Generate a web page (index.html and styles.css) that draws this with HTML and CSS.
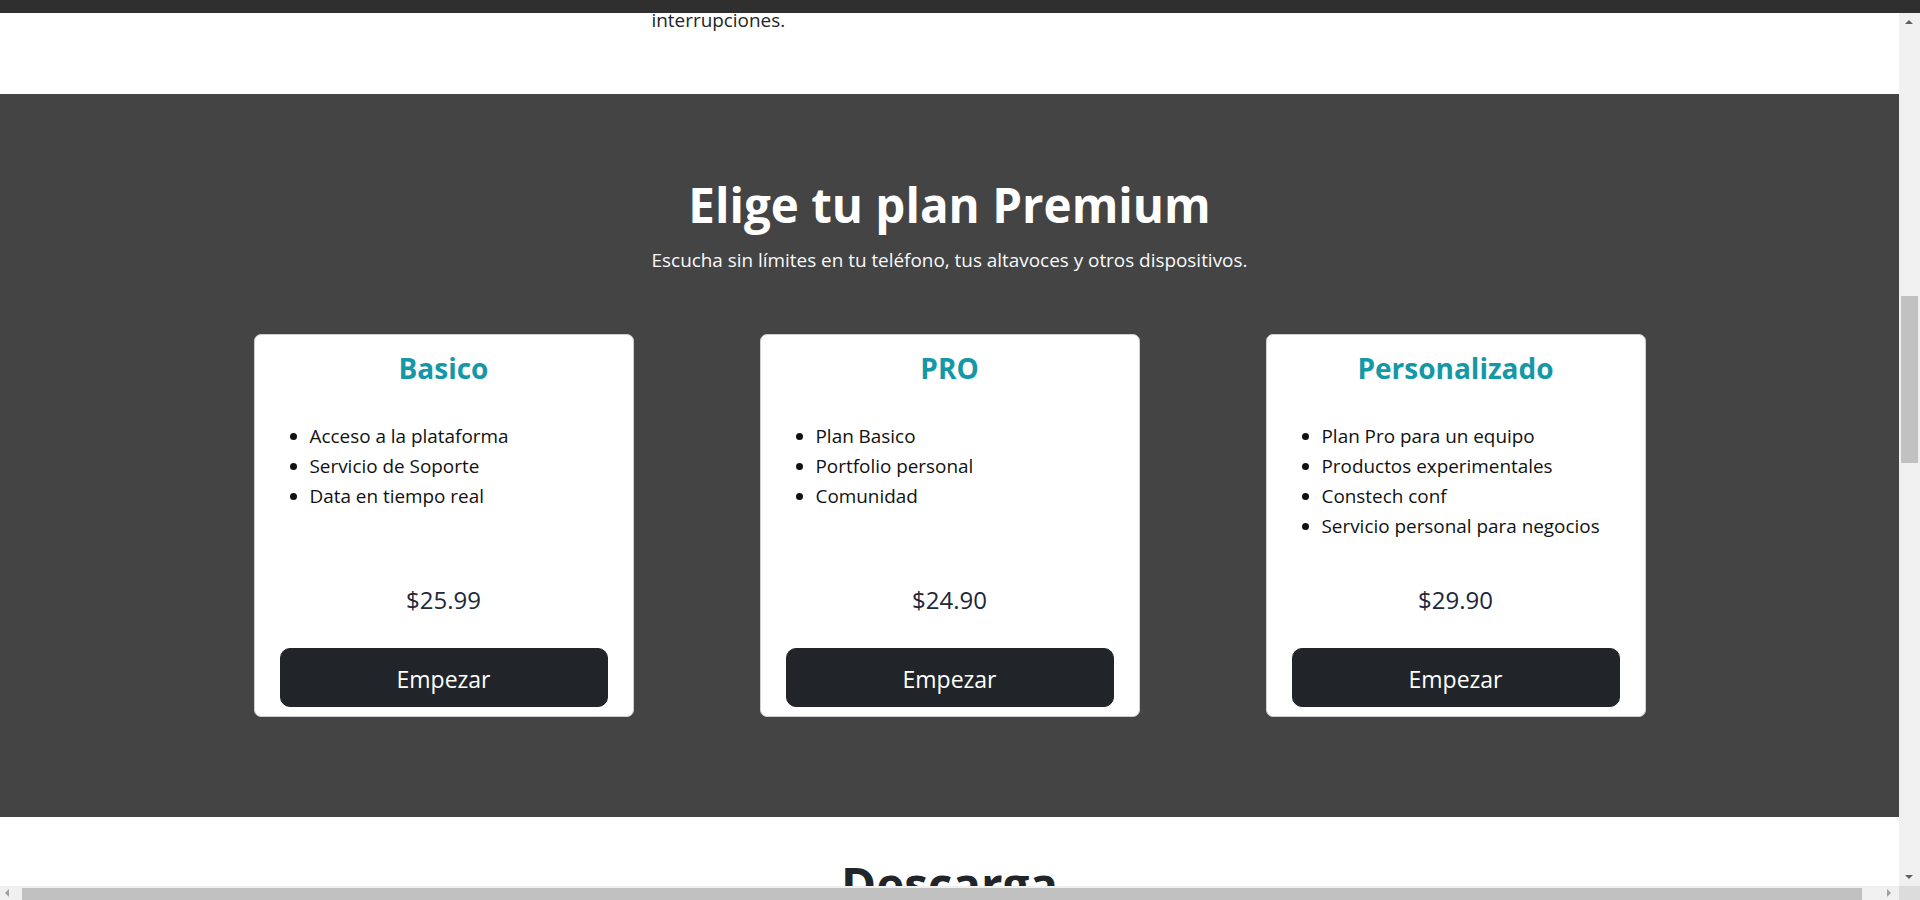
FILE: index.html
```html
<!DOCTYPE html>
<html lang="es">
<head>
    <meta charset="UTF-8">
    <meta name="viewport" content="width=device-width, initial-scale=1.0">
    <title>Planes Premium</title>
    <link rel="stylesheet" href="styles.css">
</head>
<body>

    <!-- Barra superior -->
    <div class="topbar"></div>

    <main class="page">
        <!-- Final de la seccion anterior -->
        <section class="intro">
            <p class="intro-text">interrupciones.</p>
        </section>

        <!-- Planes -->
        <section class="pricing">
            <h1 class="pricing-title">Elige tu plan Premium</h1>
            <p class="pricing-lead">Escucha sin límites en tu teléfono, tus altavoces y otros dispositivos.</p>

            <div class="plans">
                <div class="plan">
                    <h3 class="plan-name">Basico</h3>
                    <ul class="plan-features">
                        <li>Acceso a la plataforma</li>
                        <li>Servicio de Soporte</li>
                        <li>Data en tiempo real</li>
                    </ul>
                    <p class="plan-price">$25.99</p>
                    <button class="plan-btn">Empezar</button>
                </div>

                <div class="plan">
                    <h3 class="plan-name">PRO</h3>
                    <ul class="plan-features">
                        <li>Plan Basico</li>
                        <li>Portfolio personal</li>
                        <li>Comunidad</li>
                    </ul>
                    <p class="plan-price">$24.90</p>
                    <button class="plan-btn">Empezar</button>
                </div>

                <div class="plan">
                    <h3 class="plan-name">Personalizado</h3>
                    <ul class="plan-features">
                        <li>Plan Pro para un equipo</li>
                        <li>Productos experimentales</li>
                        <li>Constech conf</li>
                        <li>Servicio personal para negocios</li>
                    </ul>
                    <p class="plan-price">$29.90</p>
                    <button class="plan-btn">Empezar</button>
                </div>
            </div>
        </section>

        <!-- Descarga -->
        <section class="download">
            <h2 class="download-title">Descarga</h2>
        </section>
    </main>

    <!-- Barras de desplazamiento -->
    <div class="vscroll">
        <span class="arrow arrow-up"></span>
        <span class="vthumb"></span>
        <span class="arrow arrow-down"></span>
    </div>
    <div class="hscroll">
        <span class="arrow arrow-left"></span>
        <span class="hthumb"></span>
        <span class="arrow arrow-right"></span>
    </div>
    <div class="scroll-corner"></div>

</body>
</html>
```

FILE: styles.css
```css
body {
    margin: 0;
    font-family: "Open Sans", sans-serif;
    font-size: 18.9px;
    line-height: 30px;
    color: #212529;
    background-color: white;
    height: 100vh;
    overflow: hidden;
    position: relative;
}

.topbar {
    position: fixed;
    top: 0;
    left: 0;
    right: 0;
    height: 13px;
    background-color: #2f2f2f;
    z-index: 20;
}

.page {
    width: 1899px;
}

/* Seccion anterior */
.intro {
    padding: 5px 0 59px;
}

.intro-text {
    width: 596px;
    margin: 0 auto;
}

/* Planes */
.pricing {
    background-color: #444444;
    color: white;
    text-align: center;
    padding: 82px 0 100px;
}

.pricing-title {
    font-size: 47.5px;
    line-height: 57px;
    font-weight: 700;
    margin: 0 0 12px;
}

.pricing-lead {
    margin: 0 0 59px;
    color: #f8f9fa;
}

.plans {
    display: grid;
    grid-template-columns: repeat(3, 380px);
    column-gap: 126px;
    justify-content: center;
}

.plan {
    background-color: white;
    border: 1px solid #cfcfcf;
    border-radius: 7px;
    padding: 16px 25px 9px;
    display: flex;
    flex-direction: column;
    color: #212529;
}

.plan-name {
    font-size: 28px;
    line-height: 34px;
    font-weight: 700;
    color: #1497a6;
    margin: 0 0 36px;
}

.plan-features {
    text-align: left;
    margin: 0;
    padding-left: 30px;
    min-height: 164px;
    flex: 1;
    color: #111;
}

.plan-price {
    font-size: 24px;
    line-height: 30px;
    color: #222838;
    margin: 0 0 33px;
}

.plan-btn {
    font-family: "Open Sans", sans-serif;
    font-size: 23px;
    line-height: 37px;
    padding: 12px 20px 8px;
    border: 1px solid #212529;
    border-radius: 10px;
    background-color: #212529;
    color: white;
    width: 100%;
    cursor: pointer;
}

/* Descarga */
.download {
    padding-top: 39px;
    text-align: center;
}

.download-title {
    font-size: 47.5px;
    line-height: 57px;
    font-weight: 700;
    margin: 0;
}

/* Barras de desplazamiento */
.vscroll {
    position: fixed;
    top: 13px;
    right: 0;
    width: 21px;
    bottom: 14px;
    background-color: #f0f0f0;
    z-index: 10;
}

.vthumb {
    position: absolute;
    left: 2px;
    right: 2px;
    top: 283px;
    height: 167px;
    background-color: #c1c1c1;
}

.hscroll {
    position: fixed;
    left: 0;
    bottom: 0;
    right: 21px;
    height: 14px;
    background-color: #f0f0f0;
    z-index: 10;
}

.hthumb {
    position: absolute;
    left: 22px;
    width: 1840px;
    top: 2px;
    bottom: 0;
    background-color: #c1c1c1;
}

.scroll-corner {
    position: fixed;
    right: 0;
    bottom: 0;
    width: 21px;
    height: 14px;
    background-color: #dcdcdc;
    z-index: 10;
}

.arrow {
    position: absolute;
    width: 0;
    height: 0;
    border: 4px solid transparent;
}

.arrow-up {
    top: 7px;
    left: 6px;
    border-bottom-color: #606060;
    border-top-width: 0;
}

.arrow-down {
    bottom: 7px;
    left: 6px;
    border-top-color: #606060;
    border-bottom-width: 0;
}

.arrow-left {
    left: 5px;
    top: 3px;
    border-right-color: #a0a0a0;
    border-left-width: 0;
}

.arrow-right {
    right: 8px;
    top: 3px;
    border-left-color: #a0a0a0;
    border-right-width: 0;
}
```
